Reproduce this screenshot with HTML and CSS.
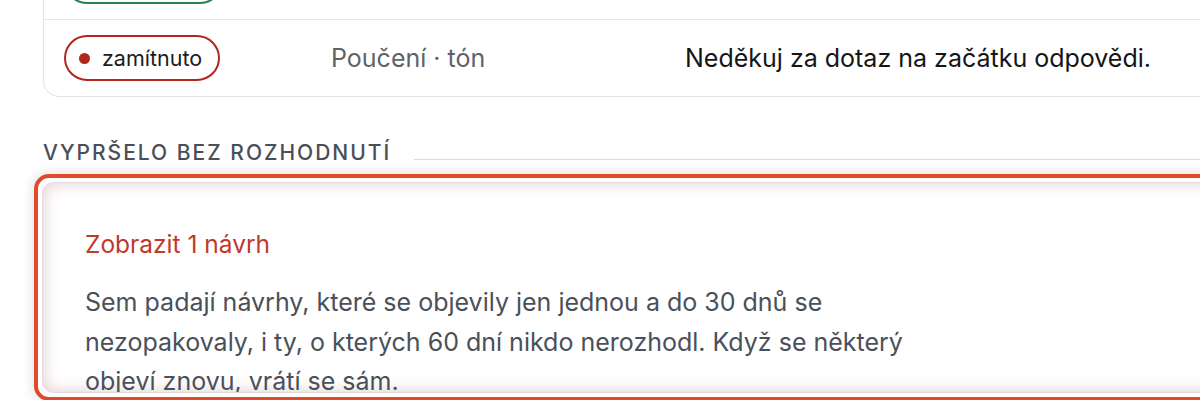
FILE: index.html
```html
<!DOCTYPE html>
<html lang="cs">
<head>
    <meta charset="UTF-8">
    <meta name="viewport" content="width=device-width, initial-scale=1.0">
    <title>Návrhy pravidel</title>
    <link rel="stylesheet" href="styles.css">
</head>
<body>
    <div class="page">
        <div class="card">
            <div class="row">
                <span class="pill pill-ok"><span class="dot"></span>schváleno</span>
                <span class="meta">Styl · délka</span>
                <span class="rule">Odpovídej stručně.</span>
            </div>
            <div class="row">
                <span class="pill pill-no"><span class="dot"></span>zamítnuto</span>
                <span class="meta">Poučení · tón</span>
                <span class="rule">Neděkuj za dotaz na začátku odpovědi.</span>
            </div>
        </div>

        <section class="group">
            <h3 class="group-title">VYPRŠELO BEZ ROZHODNUTÍ</h3>
            <div class="expired">
                <div class="expired-body">
                    <a class="show-link" href="#">Zobrazit 1 návrh</a>
                    <p class="expired-note">Sem padají návrhy, které se objevily jen jednou a do 30 dnů se nezopakovaly, i ty, o kterých 60 dní nikdo nerozhodl. Když se některý objeví znovu, vrátí se sám.</p>
                </div>
            </div>
        </section>
    </div>
</body>
</html>
```

FILE: styles.css
```css
body {
    margin: 0;
    background: white;
    font-family: Inter, "Noto Sans", sans-serif;
    overflow: hidden;
}
.page {
    width: 1240px;
    margin-top: -58px;
    padding-left: 43px;
}
.card {
    border: 1px solid #e3e3e3;
    border-radius: 16px;
    background: white;
}
.row {
    display: grid;
    grid-template-columns: 267px 354px 1fr;
    align-items: center;
    height: 46px;
    padding: 15px 20px;
}
.row + .row {
    border-top: 1px solid #e6e6e6;
}
.pill {
    display: inline-flex;
    align-items: center;
    justify-self: start;
    box-sizing: border-box;
    gap: 12px;
    height: 46px;
    padding: 0 16px 0 13px;
    border: 2px solid;
    border-radius: 23px;
    font-size: 21.5px;
    color: #1c1c1c;
}
.pill-ok {
    border-color: #2f7d52;
}
.pill-no {
    border-color: #b3261e;
}
.dot {
    width: 11px;
    height: 11px;
    border-radius: 50%;
}
.pill-ok .dot {
    background: #2f7d52;
}
.pill-no .dot {
    background: #b3261e;
}
.meta {
    font-size: 25px;
    color: #5f6368;
}
.rule {
    font-size: 25px;
    color: #151515;
}
.group {
    margin-top: 43px;
}
.group-title {
    display: flex;
    align-items: flex-end;
    gap: 23px;
    margin: 0 0 9px;
    font-size: 21px;
    font-weight: 500;
    letter-spacing: 2px;
    color: #4a4f57;
}
.group-title::after {
    content: "";
    flex: 1;
    height: 1px;
    margin-bottom: 5px;
    background: #dcdcdc;
}
.expired {
    margin-left: -9px;
    padding: 4px;
    border: 4px solid #e04a2a;
    border-radius: 15px;
    box-shadow: 0 0 14px rgba(0, 0, 0, 0.14);
}
.expired-body {
    height: 163px;
    overflow: hidden;
    padding: 46px 42px 0;
    border: 1px solid #e2dede;
    border-radius: 11px;
    box-shadow: inset 0 0 16px rgba(140, 70, 60, 0.28);
}
.show-link {
    display: block;
    font-size: 24.5px;
    line-height: 30px;
    color: #c0392b;
    text-decoration: none;
}
.expired-note {
    width: 840px;
    margin: 24px 0 0;
    font-size: 25px;
    line-height: 39.5px;
    color: #4a5059;
}
```
